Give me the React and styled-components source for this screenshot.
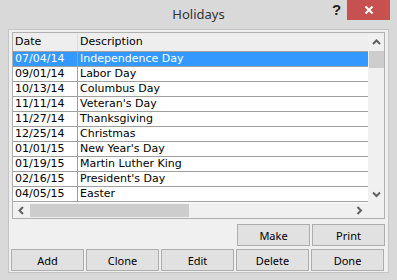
import React from 'react';
import styled, { createGlobalStyle } from 'styled-components';

const GlobalStyle = createGlobalStyle`
  html, body {
    margin: 0;
    padding: 0;
    background: #d9d9d9;
  }
`;

const holidays = [
  { date: '07/04/14', name: 'Independence Day' },
  { date: '09/01/14', name: 'Labor Day' },
  { date: '10/13/14', name: 'Columbus Day' },
  { date: '11/11/14', name: "Veteran's Day" },
  { date: '11/27/14', name: 'Thanksgiving' },
  { date: '12/25/14', name: 'Christmas' },
  { date: '01/01/15', name: "New Year's Day" },
  { date: '01/19/15', name: 'Martin Luther King' },
  { date: '02/16/15', name: "President's Day" },
  { date: '04/05/15', name: 'Easter' },
];

const Window = styled.div`
  width: 397px;
  height: 280px;
  background: #d9d9d9;
  display: flex;
  flex-direction: column;
  box-sizing: border-box;
`;

const TitleBar = styled.div`
  height: 29px;
  flex: none;
  display: flex;
  align-items: flex-start;
  position: relative;
`;

const Title = styled.div`
  flex: 1;
  text-align: center;
  font-family: 'Noto Sans', sans-serif;
  font-size: 13px;
  line-height: 29px;
  color: #333;
`;

const HelpMark = styled.div`
  position: absolute;
  left: 332px;
  top: 1px;
  font-family: 'Liberation Sans', sans-serif;
  font-weight: bold;
  font-size: 15px;
  color: #222;
`;

const CloseButton = styled.div`
  position: absolute;
  left: 347px;
  top: 0;
  width: 43px;
  height: 20px;
  background: #c75050;
  display: flex;
  align-items: center;
  justify-content: center;
`;

const Client = styled.div`
  margin: 0 8px 7px 8px;
  flex: 1;
  background: #f0f0f0;
  border: 1px solid #c4c4c4;
  padding: 2px 3px 0 3px;
  display: flex;
  flex-direction: column;
`;

const ListBox = styled.div`
  height: 187px;
  box-sizing: border-box;
  border: 1px solid #b0b0b0;
  display: grid;
  grid-template-columns: 1fr 16px;
  grid-template-rows: 1fr 15px;
  background: #f0f0f0;
`;

const Table = styled.div`
  background: #fff;
  font-family: 'DejaVu Sans', sans-serif;
  font-size: 11px;
  color: #000;
  overflow: hidden;
`;

const Row = styled.div`
  display: grid;
  grid-template-columns: 65px 1fr;
  height: 14px;
  line-height: 14px;
  border-bottom: 1px solid #a0a0a0;
  background: ${(p) => (p.$selected ? '#3399ff' : '#fff')};
  color: ${(p) => (p.$selected ? '#fff' : '#000')};
`;

const HeaderRow = styled(Row)`
  height: 18px;
  line-height: 18px;
  background: #eeeeee;
  color: #000;
  border-bottom: 1px solid #a0a0a0;
`;

const Cell = styled.div`
  padding-left: 2px;
  white-space: nowrap;
  border-right: ${(p) => (p.$first ? '1px solid #a0a0a0' : 'none')};
`;

const HeaderCell = styled(Cell)`
  border-right: ${(p) => (p.$first ? '1px solid #dcdcdc' : 'none')};
`;

const VScroll = styled.div`
  background: #f0f0f0;
  display: flex;
  flex-direction: column;
  align-items: stretch;
`;

const ArrowBox = styled.div`
  height: ${(p) => p.$h || 17}px;
  width: ${(p) => p.$w || 'auto'};
  flex: none;
  display: flex;
  align-items: center;
  justify-content: center;
`;

const VThumb = styled.div`
  height: 17px;
  margin: 0 0 0 1px;
  background: #cdcdcd;
`;

const Spacer = styled.div`
  flex: 1;
`;

const HScroll = styled.div`
  background: #f0f0f0;
  display: flex;
  align-items: stretch;
`;

const HThumb = styled.div`
  width: 159px;
  margin: 1px 0;
  background: #cdcdcd;
`;

const Corner = styled.div`
  background: #f0f0f0;
`;

const ButtonRow = styled.div`
  display: flex;
  gap: 2px;
  justify-content: ${(p) => (p.$right ? 'flex-end' : 'flex-start')};
  margin-top: ${(p) => p.$top}px;
  margin-left: -1px;
`;

const Button = styled.button`
  width: 73px;
  height: 22px;
  box-sizing: border-box;
  background: #e1e1e1;
  border: 1px solid #adadad;
  font-family: 'Noto Sans', sans-serif;
  font-size: 11px;
  color: #000;
  padding: 0;
  margin: 0;
  cursor: pointer;
`;

const Chevron = ({ dir }) => {
  const paths = {
    up: 'M1 6 L4.5 2.5 L8 6',
    down: 'M1 2.5 L4.5 6 L8 2.5',
    left: 'M6 1 L2.5 4.5 L6 8',
    right: 'M2.5 1 L6 4.5 L2.5 8',
  };
  return (
    <svg width="9" height="9" viewBox="0 0 9 9">
      <path d={paths[dir]} fill="none" stroke="#606060" strokeWidth="2" />
    </svg>
  );
};

const App = () => {
  return (
    <>
      <GlobalStyle />
      <Window>
        <TitleBar>
          <Title>Holidays</Title>
          <HelpMark>?</HelpMark>
          <CloseButton>
            <svg width="10" height="10" viewBox="0 0 10 10">
              <path d="M1.5 1.5 L8.5 8.5 M8.5 1.5 L1.5 8.5" stroke="#fff" strokeWidth="2" />
            </svg>
          </CloseButton>
        </TitleBar>
        <Client>
          <ListBox>
            <Table>
              <HeaderRow>
                <HeaderCell $first>Date</HeaderCell>
                <HeaderCell>Description</HeaderCell>
              </HeaderRow>
              {holidays.map((h, i) => (
                <Row key={h.date} $selected={i === 0}>
                  <Cell $first>{h.date}</Cell>
                  <Cell>{h.name}</Cell>
                </Row>
              ))}
            </Table>
            <VScroll>
              <ArrowBox $h={18}>
                <Chevron dir="up" />
              </ArrowBox>
              <VThumb />
              <Spacer />
              <ArrowBox $h={17}>
                <Chevron dir="down" />
              </ArrowBox>
            </VScroll>
            <HScroll>
              <ArrowBox $w="17px" $h={15}>
                <Chevron dir="left" />
              </ArrowBox>
              <HThumb />
              <Spacer />
              <ArrowBox $w="17px" $h={15}>
                <Chevron dir="right" />
              </ArrowBox>
            </HScroll>
            <Corner />
          </ListBox>
          <ButtonRow $right $top={5}>
            <Button>Make</Button>
            <Button>Print</Button>
          </ButtonRow>
          <ButtonRow $top={3}>
            <Button>Add</Button>
            <Button>Clone</Button>
            <Button>Edit</Button>
            <Button>Delete</Button>
            <Button>Done</Button>
          </ButtonRow>
        </Client>
      </Window>
    </>
  );
};

export default App;
